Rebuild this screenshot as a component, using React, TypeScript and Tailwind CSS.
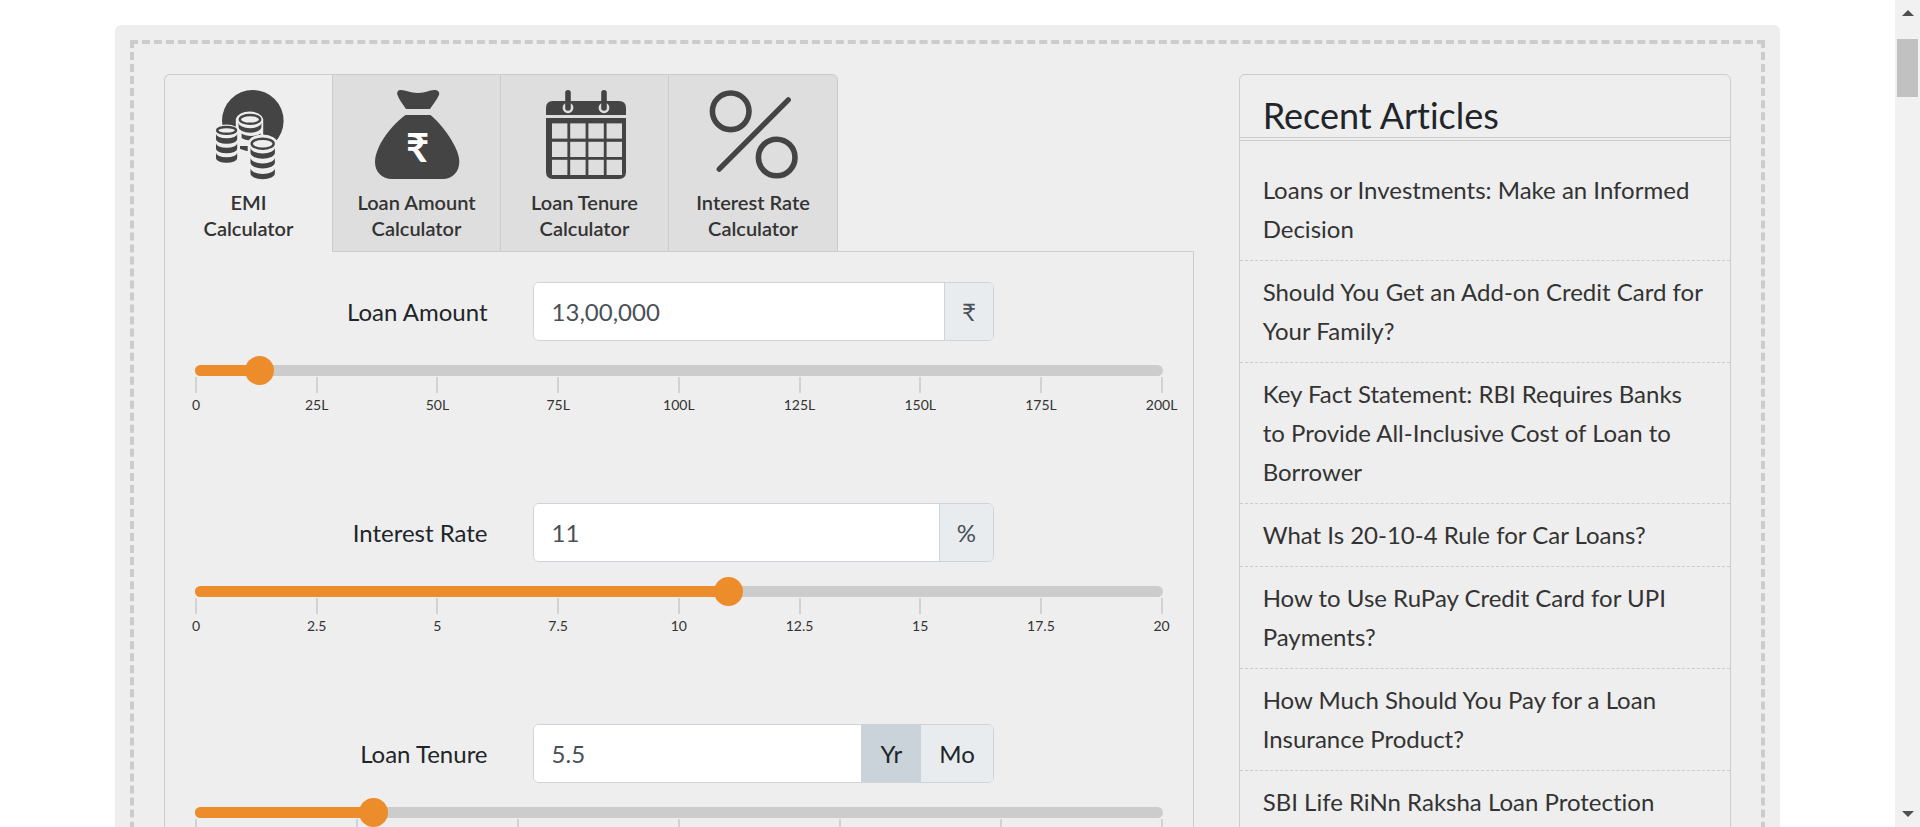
import { useState, type ReactNode } from "react";

const ink = "#444444";

type StackProps = { cx: number; cy: number; rx: number; ry: number; bands: number[]; thick: number };

function CoinStack({ cx, cy, rx, ry, bands, thick }: StackProps) {
  const l = cx - rx;
  const r = cx + rx;
  return (
    <g>
      <ellipse cx={cx} cy={cy} rx={rx - 1.2} ry={ry - 1} fill="#eeeeee" stroke={ink} strokeWidth="2.4" />
      {bands.map((y) => (
        <path
          key={y}
          fill={ink}
          d={`M${l} ${y - thick}A${rx} ${ry} 0 0 0 ${r} ${y - thick}V${y}A${rx} ${ry} 0 0 1 ${l} ${y}Z`}
        />
      ))}
    </g>
  );
}

function CoinsIcon() {
  return (
    <svg viewBox="0 0 90 90" className="size-[90px]" aria-hidden="true">
      <circle cx="48.8" cy="30.8" r="30.8" fill={ink} />
      <path d="M31.8 29A14 9.5 0 0 1 59.2 29V56H31.8Z" fill="#eeeeee" />
      <CoinStack cx={46} cy={29.4} rx={11.4} ry={5.4} bands={[37.3]} thick={4.5} />
      <path d="M37.6 43.5A11.4 5.4 0 0 0 56.6 43.5V48A11.4 5.4 0 0 1 37.6 48Z" fill={ink} />
      <path d="M9 42A13.5 7.5 0 0 1 36 42V78H9Z" fill="#eeeeee" />
      <CoinStack cx={22.6} cy={40.4} rx={10.6} ry={4.4} bands={[49.3, 58.8, 68.3]} thick={5.5} />
      <path d="M43.7 54A15 9.6 0 0 1 73.7 54V90H43.7Z" fill="#eeeeee" />
      <CoinStack cx={58.7} cy={53.7} rx={12.2} ry={6} bands={[62.8, 72.6, 83.2]} thick={5.2} />
    </svg>
  );
}

function BagIcon() {
  return (
    <svg viewBox="0 0 90 90" className="size-[90px]" aria-hidden="true">
      <path
        fill={ink}
        d="M29 0C34 0 38 3 46 3S57 0 62 0C66 0 68 2 67 5C65 10 61 14 58 19H34C31 14 27 10 25.5 5C24.500 2 26 0 29 0Z"
      />
      <path
        fill={ink}
        d="M33.500 25H58.500C66 31 74 41 80 51C84 58 87.300 65 87.300 72C87.300 82 80 89 71 89H20C10 89 3 82 3 72C3 65 6.500 57 10 51C16 41 25 31 33.500 25Z"
      />
      <text x="45.500" y="71.500" textAnchor="middle" fill="#ffffff" fontFamily="Lato, sans-serif" fontWeight="700" fontSize="40">
        ₹
      </text>
    </svg>
  );
}

function CalendarIcon() {
  const xs = [12, 30.2, 48.4, 66.6];
  const ys = [33.4, 51.8, 69.8];
  return (
    <svg viewBox="0 0 90 90" className="size-[90px]" aria-hidden="true">
      <path d="M6 25V18Q6 11 13 11H79Q86 11 86 18V25Z" fill={ink} />
      <path d="M6 28H86V82Q86 89 79 89H13Q6 89 6 82Z" fill={ink} />
      {[28, 64].map((x) => (
        <g key={x}>
          <circle cx={x} cy="17.800" r="5.400" fill="#dedede" />
          <path d={`M${x} 2.800V18`} stroke={ink} strokeWidth="5.600" strokeLinecap="round" />
        </g>
      ))}
      {ys.map((y) => xs.map((x) => <rect key={`${x}-${y}`} x={x} y={y} width="15.400" height="15.200" fill="#dedede" />))}
    </svg>
  );
}

function PercentIcon() {
  return (
    <svg viewBox="0 0 90 90" className="size-[90px]" fill="none" stroke={ink} aria-hidden="true">
      <circle cx="22.700" cy="21.300" r="18.300" strokeWidth="5.600" />
      <circle cx="68.700" cy="67.500" r="18.300" strokeWidth="5.600" />
      <path d="M11.200 79.200L80.300 9.800" strokeWidth="5.200" strokeLinecap="round" />
    </svg>
  );
}

const tabs: { lines: [string, string]; icon: ReactNode }[] = [
  { lines: ["EMI", "Calculator"], icon: <CoinsIcon /> },
  { lines: ["Loan Amount", "Calculator"], icon: <BagIcon /> },
  { lines: ["Loan Tenure", "Calculator"], icon: <CalendarIcon /> },
  { lines: ["Interest Rate", "Calculator"], icon: <PercentIcon /> },
];

const articles = [
  "Loans or Investments: Make an Informed Decision",
  "Should You Get an Add-on Credit Card for Your Family?",
  "Key Fact Statement: RBI Requires Banks to Provide All-Inclusive Cost of Loan to Borrower",
  "What Is 20-10-4 Rule for Car Loans?",
  "How to Use RuPay Credit Card for UPI Payments?",
  "How Much Should You Pay for a Loan Insurance Product?",
  "SBI Life RiNn Raksha Loan Protection",
];

type FieldProps = {
  id: string;
  label: string;
  value: number;
  text: string;
  max: number;
  step: number;
  marks: string[];
  onChange: (value: number) => void;
  addon: ReactNode;
};

function Field({ id, label, value, text, max, step, marks, onChange, addon }: FieldProps) {
  return (
    <div className="mb-[89px]">
      <div className="grid grid-cols-12 items-center gap-x-[45px]">
        <label htmlFor={id} className="col-span-4 text-right">
          {label}
        </label>
        <div className="col-span-6 flex h-[59px] overflow-hidden rounded-md border border-[#ced4da] bg-white">
          <input
            id={id}
            type="text"
            value={text}
            onChange={(e) => onChange(Math.min(max, Number(e.target.value.replace(/[^0-9.]/g, "")) || 0))}
            className="min-w-0 flex-1 bg-white px-[18px] text-[#495057] outline-none"
          />
          {addon}
        </div>
      </div>
      <div className="relative mt-6 h-[11px] rounded-md bg-[#cccccc]">
        <div className="h-full rounded-md bg-[#ed8c2b]" style={{ width: `${(value / max) * 100}%` }} />
        <input
          type="range"
          aria-label={`${label} slider`}
          min={0}
          max={max}
          step={step}
          value={value}
          onChange={(e) => onChange(Number(e.target.value))}
          className="absolute -top-[9px] -left-[13px] h-[29px] w-[calc(100%+28px)] cursor-pointer appearance-none bg-transparent outline-none [&::-webkit-slider-thumb]:size-[29px] [&::-webkit-slider-thumb]:appearance-none [&::-webkit-slider-thumb]:rounded-full [&::-webkit-slider-thumb]:bg-[#ed8c2b]"
        />
      </div>
      <div className="mt-px flex justify-between px-px">
        {marks.map((mark) => (
          <div key={mark} className="flex w-0 flex-col items-center">
            <span className="h-4 w-[2px] shrink-0 bg-[#d2d2d6]" />
            <span className="mt-[3px] text-[14px] leading-[18px] whitespace-nowrap text-[#333333]">{mark}</span>
          </div>
        ))}
      </div>
    </div>
  );
}

function Unit({ children }: { children: ReactNode }) {
  return (
    <span className="flex items-center border-l border-[#ced4da] bg-[#e8ecef] px-[17px] text-[#495057]">{children}</span>
  );
}

function Scrollbar() {
  return (
    <div className="flex w-[25px] shrink-0 flex-col items-center bg-[#f1f1f1]" aria-hidden="true">
      <svg viewBox="0 0 12 6" className="mt-[10px] h-[6px] w-3">
        <path d="M6 0L12 6H0Z" fill="#505050" />
      </svg>
      <div className="mt-[23px] h-[58px] w-[21px] bg-[#c1c1c1]" />
      <svg viewBox="0 0 12 6" className="mt-auto mb-[10px] h-[6px] w-3">
        <path d="M0 0H12L6 6Z" fill="#505050" />
      </svg>
    </div>
  );
}

export default function App() {
  const [tab, setTab] = useState(0);
  const [amount, setAmount] = useState(1300000);
  const [rate, setRate] = useState(11);
  const [tenure, setTenure] = useState(5.5);
  const [unit, setUnit] = useState("Yr");

  return (
    <div className="flex h-screen overflow-hidden bg-white font-['Lato',sans-serif] text-[24px] leading-[36px] text-[#212529] [font-variant-ligatures:none]">
      <main className="min-w-0 flex-1 overflow-hidden px-[115px] pt-[25px]">
        <div className="rounded-md bg-[#eeeeee] p-[15px]">
          <div className="grid grid-cols-3 items-start gap-x-[45px] border-4 border-dashed border-[#cccccc] p-[30px]">
            <section className="col-span-2">
              <div role="tablist" className="relative -mb-px flex">
                {tabs.map((t, i) => (
                  <button
                    key={t.lines[0]}
                    type="button"
                    role="tab"
                    aria-selected={tab === i}
                    onClick={() => setTab(i)}
                    className={`flex w-[168px] cursor-pointer flex-col items-center border-t border-b border-l border-[#cccccc] pt-[15px] pb-[10px] text-[20px] leading-[26px] font-semibold text-[#333333] first:rounded-tl-md last:w-[170px] last:rounded-tr-md last:border-r ${
                      tab === i ? "border-b-[#eeeeee] bg-[#eeeeee]" : "bg-[#dedede]"
                    }`}
                  >
                    {t.icon}
                    <span className="mt-[9px]">{t.lines[0]}</span>
                    <span>{t.lines[1]}</span>
                  </button>
                ))}
              </div>
              <div className="border border-[#cccccc] p-[30px]">
                <Field
                  id="loan-amount"
                  label="Loan Amount"
                  value={amount}
                  text={amount.toLocaleString("en-IN")}
                  max={20000000}
                  step={100000}
                  marks={["0", "25L", "50L", "75L", "100L", "125L", "150L", "175L", "200L"]}
                  onChange={setAmount}
                  addon={<Unit>₹</Unit>}
                />
                <Field
                  id="interest-rate"
                  label="Interest Rate"
                  value={rate}
                  text={String(rate)}
                  max={20}
                  step={0.25}
                  marks={["0", "2.5", "5", "7.5", "10", "12.5", "15", "17.5", "20"]}
                  onChange={setRate}
                  addon={<Unit>%</Unit>}
                />
                <Field
                  id="loan-tenure"
                  label="Loan Tenure"
                  value={tenure}
                  text={String(tenure)}
                  max={30}
                  step={0.5}
                  marks={["0", "5", "10", "15", "20", "25", "30"]}
                  onChange={setTenure}
                  addon={["Yr", "Mo"].map((u) => (
                    <button
                      key={u}
                      type="button"
                      aria-pressed={unit === u}
                      onClick={() => setUnit(u)}
                      className={`min-w-[60px] cursor-pointer px-[18px] ${unit === u ? "bg-[#cad2da]" : "bg-[#e8ecef]"}`}
                    >
                      {u}
                    </button>
                  ))}
                />
              </div>
            </section>

            <aside className="rounded-md border border-[#cccccc]">
              <h2 className="border-b-4 border-double border-[#cccccc] px-[23px] pt-[18px] text-[36px] leading-[44px]">
                Recent Articles
              </h2>
              <ul className="pt-[18px]">
                {articles.map((title) => (
                  <li key={title} className="border-b border-dashed border-[#cccccc] px-[23px] pt-[11px] pb-3 leading-[39px]">
                    <a href="#" className="text-[#333333]">
                      {title}
                    </a>
                  </li>
                ))}
              </ul>
            </aside>
          </div>
        </div>
      </main>
      <Scrollbar />
    </div>
  );
}
